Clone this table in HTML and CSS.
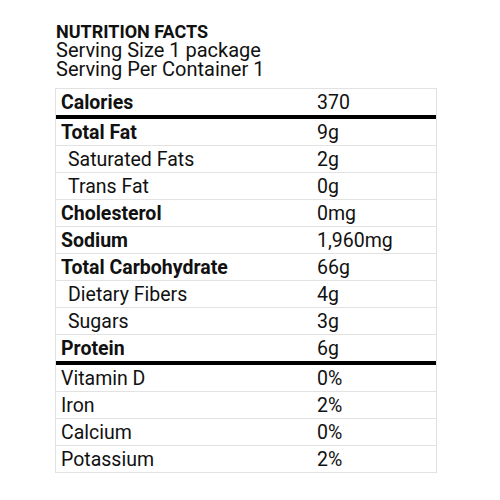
FILE: index.html
```html
<!DOCTYPE html>
<html>
<head>
<meta charset="utf-8">
<link rel="stylesheet" href="styles.css">
</head>
<body>
<div class="page">
  <div class="head">
    <div class="title">NUTRITION FACTS</div>
    <div class="sub">Serving Size 1 package</div>
    <div class="sub">Serving Per Container 1</div>
  </div>
  <div class="table">
    <div class="row thick"><div class="lbl b">Calories</div><div class="val">370</div></div>
    <div class="row"><div class="lbl b">Total Fat</div><div class="val">9g</div></div>
    <div class="row"><div class="lbl ind">Saturated Fats</div><div class="val">2g</div></div>
    <div class="row"><div class="lbl ind">Trans Fat</div><div class="val">0g</div></div>
    <div class="row"><div class="lbl b">Cholesterol</div><div class="val">0mg</div></div>
    <div class="row"><div class="lbl b">Sodium</div><div class="val">1,960mg</div></div>
    <div class="row"><div class="lbl b">Total Carbohydrate</div><div class="val">66g</div></div>
    <div class="row"><div class="lbl ind">Dietary Fibers</div><div class="val">4g</div></div>
    <div class="row"><div class="lbl ind">Sugars</div><div class="val">3g</div></div>
    <div class="row thick"><div class="lbl b">Protein</div><div class="val">6g</div></div>
    <div class="row"><div class="lbl">Vitamin D</div><div class="val">0%</div></div>
    <div class="row"><div class="lbl">Iron</div><div class="val">2%</div></div>
    <div class="row"><div class="lbl">Calcium</div><div class="val">0%</div></div>
    <div class="row last"><div class="lbl">Potassium</div><div class="val">2%</div></div>
  </div>
</div>
</body>
</html>
```
FILE: styles.css
```css
html, body {
  margin: 0;
  padding: 0;
  background: #fff;
}
body {
  font-family: Roboto, "Liberation Sans", sans-serif;
  color: #111;
}
.page {
  padding: 22px 63px 0 55px;
}
.head {
  padding-left: 1px;
}
.title {
  font-weight: 700;
  font-size: 18px;
  line-height: 19px;
}
.sub {
  font-size: 20px;
  line-height: 19px;
}
.table {
  margin-top: 9px;
  border: 1px solid #e2e2e2;
}
.row {
  display: grid;
  grid-template-columns: 256px 1fr;
  height: 26px;
  align-items: center;
  border-bottom: 1px solid #e2e2e2;
  font-size: 19.5px;
}
.row.thick {
  border-bottom: 4px solid #000;
}
.row.last {
  border-bottom: none;
}
.lbl {
  padding-left: 5px;
}
.lbl.b {
  font-weight: 700;
}
.lbl.ind {
  padding-left: 12px;
}
.val {
  padding-left: 5px;
}
```
